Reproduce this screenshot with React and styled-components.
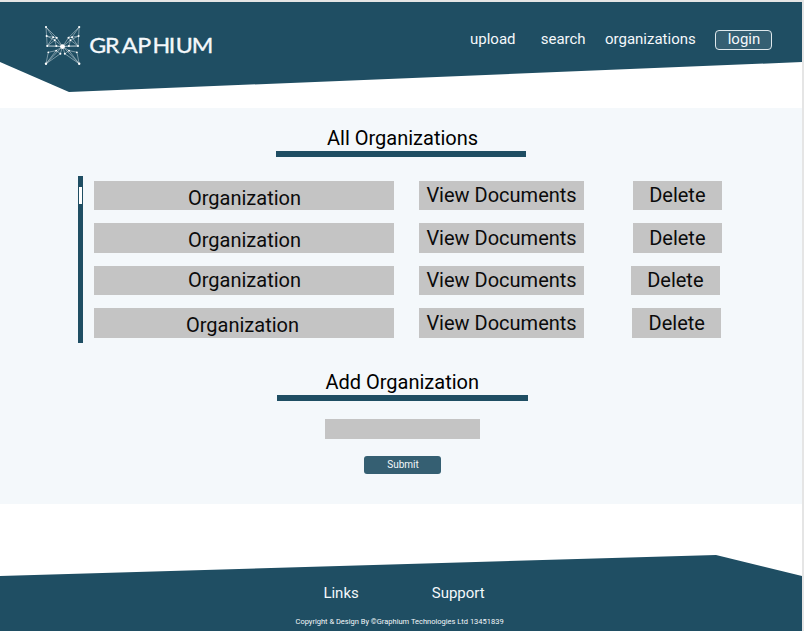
import React from "react";
import styled, { createGlobalStyle } from "styled-components";

const navy = "#1f4e63";
const steel = "#355f72";

const GlobalStyle = createGlobalStyle`
  * { box-sizing: border-box; }
  body { margin: 0; background: #e5e5e5; font-family: Roboto, "Liberation Sans", sans-serif; }
`;

const Page = styled.div`
  width: 802px;
  height: 629px;
  margin-top: 2px;
  display: flex;
  flex-direction: column;
  background: #fff;
  overflow: hidden;
`;

const Header = styled.header`
  height: 90px;
  flex: none;
  display: flex;
  align-items: flex-start;
  background: ${navy};
  clip-path: polygon(0 0, 100% 0, 100% 60px, 69px 90px, 0 60px);
`;

const Logo = styled.svg`
  flex: none;
  width: 180px;
  height: 46px;
  margin: 20px 0 0 40px;
`;

const Nav = styled.nav`
  display: flex;
  margin: 27px 0 0 250px;
  color: #f4f8fb;
  font-size: 15px;
  line-height: 20px;
  white-space: nowrap;
`;

const NavItem = styled.a`
  flex: none;
  width: ${(p) => p.$width}px;
`;

const LoginButton = styled.a`
  flex: none;
  width: 57px;
  height: 20px;
  margin-top: 1px;
  padding-left: 1px;
  border: 1px solid #dfe8ec;
  border-radius: 4px;
  background: ${steel};
  text-align: center;
  line-height: 16px;
`;

const Main = styled.main`
  height: 396px;
  flex: none;
  margin-top: 16px;
  background: #f4f8fb;
  color: #0b0b0b;
  font-size: 20px;
  line-height: 24px;
`;

const Heading = styled.h2`
  width: ${(p) => p.$width}px;
  margin: 0 0 0 ${(p) => p.$left}px;
  padding: ${(p) => p.$top}px 0 ${(p) => p.$gap}px ${(p) => p.$indent}px;
  border-bottom: 6px solid ${navy};
  font-size: 20px;
  font-weight: 400;
  color: #000;
  white-space: nowrap;
`;

const Listing = styled.section`
  display: flex;
  height: 167px;
  margin: 19px 0 0 78px;
`;

const ScrollTrack = styled.div`
  width: 5px;
  height: 167px;
  padding: 11px 1px 0;
  background: ${navy};
`;

const ScrollThumb = styled.div`
  height: 17px;
  background: #fff;
`;

const Rows = styled.div`
  display: flex;
  flex-direction: column;
  gap: 13.6px;
  padding: 4.7px 0 0 11.4px;
`;

const Row = styled.div`
  display: flex;
  height: 29px;
`;

const Tile = styled.div`
  flex: none;
  width: ${(p) => p.$width}px;
  height: 29.3px;
  margin-left: ${(p) => p.$gap || 0}px;
  padding: ${(p) => p.$top}px 0 0 ${(p) => p.$indent}px;
  background: #c4c4c4;
  white-space: nowrap;
`;

const NameInput = styled.input`
  display: block;
  width: 155px;
  height: 20px;
  margin: 18px 0 0 325px;
  padding: 0 4px;
  border: 0;
  border-radius: 0;
  background: #c4c4c4;
`;

const SubmitButton = styled.button`
  display: block;
  width: 77px;
  height: 18px;
  margin: 17px 0 0 364px;
  padding: 0 0 0 1px;
  border: 0;
  border-radius: 3px;
  background: ${steel};
  color: #f4f8fb;
  font: 10px/18px Roboto, sans-serif;
`;

const Footer = styled.footer`
  flex: none;
  height: 76px;
  margin-top: 51px;
  background: ${navy};
  color: #f4f8fb;
  clip-path: polygon(0 21px, 716px 0, 100% 21px, 100% 100%, 0 100%);
`;

const FooterLinks = styled.div`
  display: flex;
  gap: 73px;
  padding: 28px 0 0 323.4px;
  font-size: 15px;
  line-height: 20px;
`;

const Copyright = styled.p`
  margin: 14px 0 0 295.5px;
  font-size: 7.5px;
  line-height: 9px;
  white-space: nowrap;
`;

const rows = [
  { nameTop: 5, nameIndent: 93.6, deleteGap: 49 },
  { nameTop: 5, nameIndent: 93.6, deleteGap: 49 },
  { nameTop: 2, nameIndent: 93.6, deleteGap: 47 },
  { nameTop: 5, nameIndent: 91.6, deleteGap: 48.4 },
];

const wingNodes = [
  [6, 7, 1.1], [6.6, 16, 1], [13.2, 17.2, 1], [16.7, 17.7, 1], [14.7, 20.2, 0.9],
  [7.2, 26, 1], [16.3, 26, 1], [8.3, 32.3, 0.9], [16.2, 30.6, 0.9],
  [20.4, 33.7, 1], [6, 43.8, 1.2],
];

const wingLines =
  "M6 7L6.6 16L7.2 26L16.3 26L22.5 26.5L16.7 17.7L6 7L13.2 17.2L6.6 16L14.7 20.2L7.2 26L13.2 17.2L16.7 17.7L14.7 20.2L16.3 26M14.7 20.2L22.5 26.5L16.2 30.6L8.3 32.3L6 43.8L16.2 30.6L20.4 33.7L22.5 26.5L7.2 26M20.4 33.7L6 43.8L22.5 26.5";

function Wing() {
  return (
    <>
      <path d={wingLines} fill="none" stroke="#dce7eb" strokeWidth="0.7" strokeOpacity="0.7" />
      {wingNodes.map(([x, y, r]) => (
        <circle key={`${x}-${y}`} cx={x} cy={y} r={r} fill="#fff" />
      ))}
    </>
  );
}

function GraphiumLogo() {
  return (
    <Logo viewBox="0 0 180 46" aria-label="Graphium">
      <g transform="translate(0 -2)">
        <Wing />
        <g transform="translate(45.2 0) scale(-1 1)">
          <Wing />
        </g>
        <circle cx="22.5" cy="26.6" r="2.4" fill="#fff" />
      </g>
      <text
        transform="translate(49 31.2) scale(1.08 1)"
        x="0.3 14.9 30.3 44.6 58.8 73.8 80.3 95.1"
        y="0"
        fill="#f4f8fb"
        stroke="#f4f8fb"
        strokeWidth="0.35"
        fontFamily="Lato, sans-serif"
        fontSize="21.5"
      >
        GRAPHIUM
      </text>
    </Logo>
  );
}

export default function App() {
  return (
    <>
      <GlobalStyle />
      <Page>
        <Header>
          <GraphiumLogo />
          <Nav>
            <NavItem $width={70.7}>upload</NavItem>
            <NavItem $width={64.3}>search</NavItem>
            <NavItem $width={110}>organizations</NavItem>
            <LoginButton>login</LoginButton>
          </Nav>
        </Header>
        <Main>
          <Heading $left={276} $width={250} $top={18} $gap={1} $indent={51}>
            All Organizations
          </Heading>
          <Listing>
            <ScrollTrack>
              <ScrollThumb />
            </ScrollTrack>
            <Rows>
              {rows.map((row, i) => (
                <Row key={i}>
                  <Tile $width={300} $top={row.nameTop} $indent={row.nameIndent}>
                    Organization
                  </Tile>
                  <Tile $width={165} $gap={24.6} $top={2.3} $indent={7.4}>
                    View Documents
                  </Tile>
                  <Tile $width={89} $gap={row.deleteGap} $top={2.3} $indent={16.2}>
                    Delete
                  </Tile>
                </Row>
              ))}
            </Rows>
          </Listing>
          <Heading $left={277} $width={251} $top={27} $gap={1} $indent={48.4}>
            Add Organization
          </Heading>
          <NameInput aria-label="Organization name" />
          <SubmitButton>Submit</SubmitButton>
        </Main>
        <Footer>
          <FooterLinks>
            <span>Links</span>
            <span>Support</span>
          </FooterLinks>
          <Copyright>Copyright &amp; Design By ©Graphium Technologies Ltd 13451839</Copyright>
        </Footer>
      </Page>
    </>
  );
}
